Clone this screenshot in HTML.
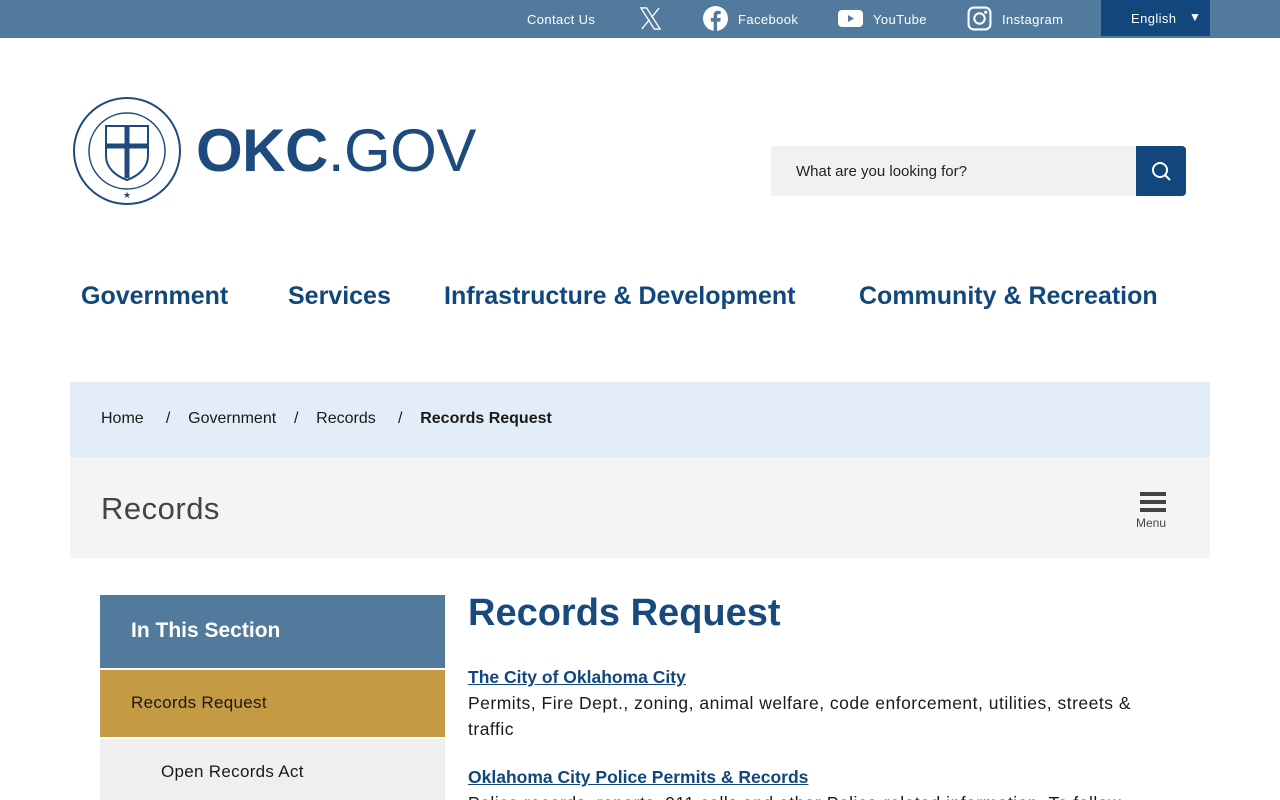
<!DOCTYPE html>
<html><head><meta charset="utf-8"><style>
*{margin:0;padding:0;box-sizing:border-box}
html{overflow:hidden}
body{width:1280px;height:800px;overflow:hidden;background:#fff;font-family:"Liberation Sans",sans-serif;color:#1a1a1a;position:relative}
.top{position:absolute;left:0;top:0;width:1280px;height:38px;background:#527a9c;color:#fff;font-size:13px;letter-spacing:.4px}
.top span{position:absolute;top:12px}
.lang{position:absolute;left:1101px;top:0;width:109px;height:36px;background:#11477c;color:#fff;font-size:13px}
a{color:#11477c}
.nav{position:absolute;top:282px;font-size:25px;font-weight:bold;color:#11477c}
</style></head><body>
<div class="top">
<span style="left:527px">Contact Us</span>
<svg style="position:absolute;left:639px;top:7px" width="23" height="23" viewBox="0 0 24 24"><path d="M2 1h6l14 22h-6z M3 23L11 13 M21 1l-8 10" stroke="#fff" stroke-width="1.4" fill="none"/></svg>
<svg style="position:absolute;left:703px;top:6px" width="25" height="25" viewBox="0 0 24 24"><circle cx="12" cy="12" r="12" fill="#fff"/><path d="M13.5 24v-9h3l.5-3.5h-3.5V9.5c0-1 .4-1.7 1.8-1.7H17V4.7c-.5-.1-1.5-.2-2.6-.2-2.6 0-4.2 1.5-4.2 4.3v2.7H7.5V15h2.7v9z" fill="#527a9c"/></svg>
<span style="left:738px">Facebook</span>
<svg style="position:absolute;left:838px;top:10px" width="25" height="17" viewBox="0 0 25 17"><rect width="25" height="17" rx="4" fill="#fff"/><path d="M10 5l6 3.5-6 3.5z" fill="#527a9c"/></svg>
<span style="left:873px">YouTube</span>
<svg style="position:absolute;left:967px;top:6px" width="25" height="25" viewBox="0 0 24 24" fill="none" stroke="#fff" stroke-width="2"><rect x="1.5" y="1.5" width="21" height="21" rx="5"/><circle cx="12" cy="12" r="5"/><circle cx="18" cy="6" r=".6" fill="#fff"/></svg>
<span style="left:1002px">Instagram</span>
<div class="lang"><span style="left:30px;top:11px">English</span><span style="left:88px;top:10px;font-size:12px">▼</span></div>
</div>
<svg style="position:absolute;left:72px;top:96px" width="110" height="110" viewBox="0 0 110 110" fill="none" stroke="#1d4b7d"><circle cx="55" cy="55" r="53" stroke-width="2"/><circle cx="55" cy="55" r="38" stroke-width="1.5"/><path d="M34 30h42v30c0 12-10 20-21 24-11-4-21-12-21-24z" stroke-width="2"/><path d="M55 30v52M34 50h42" stroke-width="5"/><text x="55" y="102" font-size="9" fill="#1d4b7d" stroke="none" text-anchor="middle">★</text></svg>
<div style="position:absolute;left:196px;top:119px;font-size:60px;line-height:64px;color:#1d4b7d;letter-spacing:-.5px"><b style="font-weight:900">OKC</b><span style="font-weight:normal">.GOV</span></div>
<div style="position:absolute;left:771px;top:146px;width:366px;height:50px;background:#f0f1f1;font-size:15px;padding:17px 25px;color:#222">What are you looking for?</div>
<div style="position:absolute;left:1136px;top:146px;width:50px;height:50px;background:#11477c;border-radius:0 4px 4px 0"><svg width="50" height="50" viewBox="0 0 50 50" fill="none" stroke="#fff" stroke-width="2"><circle cx="24" cy="24" r="7"/><path d="M29 29l5 5"/></svg></div>
<div class="nav" style="left:81px">Government</div>
<div class="nav" style="left:288px">Services</div>
<div class="nav" style="left:444px">Infrastructure &amp; Development</div>
<div class="nav" style="left:859px">Community &amp; Recreation</div>
<div style="position:absolute;left:70px;top:382px;width:1140px;height:75px;background:#e3edf7;font-size:16px;padding:28px 31px">Home &nbsp;&nbsp;&nbsp; / &nbsp;&nbsp;&nbsp;Government &nbsp;&nbsp; / &nbsp;&nbsp;&nbsp;Records &nbsp;&nbsp;&nbsp; / &nbsp;&nbsp;&nbsp;<b>Records Request</b></div>
<div style="position:absolute;left:70px;top:457px;width:1140px;height:101px;background:#f4f4f4">
<div style="position:absolute;left:31px;top:34px;font-size:31px;color:#444;letter-spacing:.5px">Records</div>
<div style="position:absolute;left:1070px;top:35px;width:26px"><div style="height:4px;background:#444;margin-bottom:4px"></div><div style="height:4px;background:#444;margin-bottom:4px"></div><div style="height:4px;background:#444"></div></div>
<div style="position:absolute;left:1066px;top:59px;font-size:12px;color:#444">Menu</div>
</div>
<div style="position:absolute;left:100px;top:595px;width:345px;height:73px;background:#527a9c;color:#fff;font-size:21px;font-weight:bold;padding:24px 31px">In This Section</div>
<div style="position:absolute;left:100px;top:670px;width:345px;height:67px;background:#c49a45;font-size:17px;padding:23px 31px;letter-spacing:.3px">Records Request</div>
<div style="position:absolute;left:100px;top:739px;width:345px;height:61px;background:#efefef;font-size:17px;padding:23px 61px;letter-spacing:.3px">Open Records Act</div>
<div style="position:absolute;left:468px;top:592px;font-size:38px;font-weight:bold;color:#184a7e">Records Request</div>
<div style="position:absolute;left:468px;top:664px;width:700px;font-size:17.5px;line-height:26px;letter-spacing:.5px">
<a href="#" style="font-weight:bold;letter-spacing:0">The City of Oklahoma City</a><br>Permits, Fire Dept., zoning, animal welfare, code enforcement, utilities, streets &amp; traffic<br><div style="height:22px"></div>
<a href="#" style="font-weight:bold;letter-spacing:0">Oklahoma City Police Permits &amp; Records</a><br>Police records, reports, 911 calls and other Police-related information. To follow
</div>
</body></html>
